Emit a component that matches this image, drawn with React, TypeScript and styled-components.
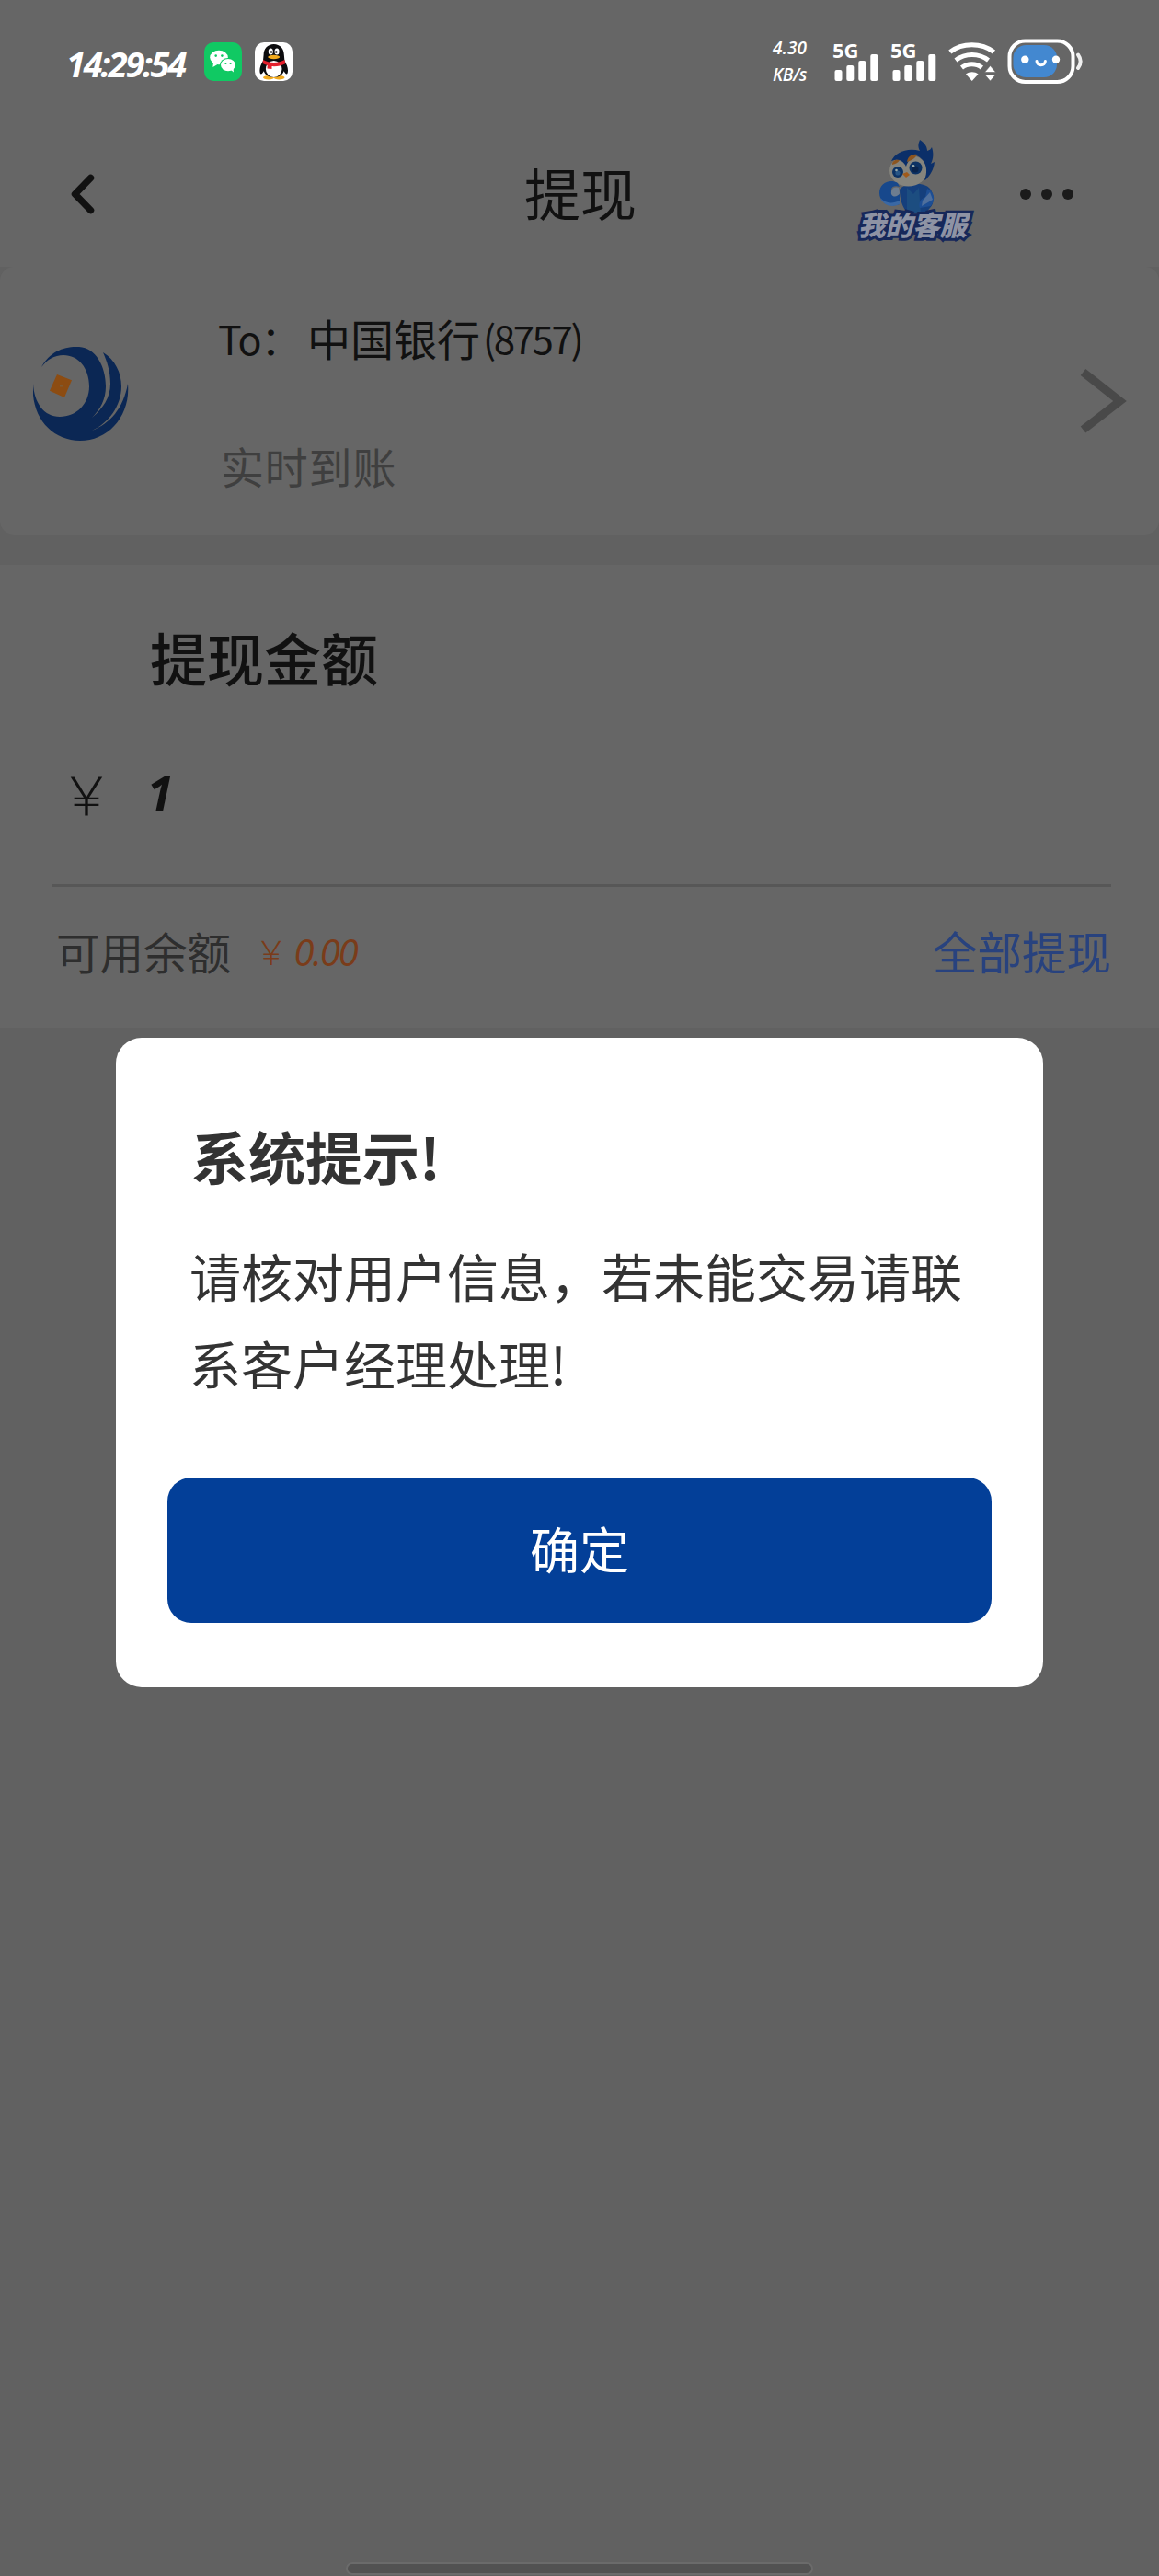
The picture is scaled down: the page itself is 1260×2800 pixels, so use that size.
import React, { FunctionComponent } from 'react'
import styled, { createGlobalStyle } from 'styled-components'

const Colors = {
    PAGE: '#616161',
    CARD: '#666666',
    INK: '#111111',
    INK_SOFT: '#2e2e2e',
    INK_MUTED: '#3f3f3f',
    LINE: '#575757',
    ARROW: '#494949',
    ORANGE: '#7a3c1a',
    LINK: '#28427e',
    NAVY: '#0b2754',
    DIALOG_TEXT: '#333333',
    PRIMARY: '#033f98',
    WHITE: '#ffffff'
}

const SIGNALS = ['sim-1', 'sim-2']

const GlobalStyle = createGlobalStyle`
    * {
        box-sizing: border-box;
    }

    body {
        margin: 0;
        background: ${Colors.PAGE};
        font-family: 'Noto Sans CJK SC', 'Noto Sans', sans-serif;
    }
`

const WechatIcon = () => (
    <svg width='41' height='42' viewBox='0 0 41 42'>
        <rect width='41' height='42' rx='10' fill='#10c963' />
        <ellipse cx='16' cy='16.5' rx='9.8' ry='7.8' fill='#fff' />
        <path d='M10 22l-.6 5 5-3z' fill='#fff' />
        <ellipse cx='26' cy='24.6' rx='9' ry='7.6' fill='#10c963' />
        <ellipse cx='26' cy='24.6' rx='8' ry='6.6' fill='#fff' />
        <path d='M29 30l3 2.4-.4-4z' fill='#fff' />
        <circle cx='12.7' cy='14.6' r='1.3' fill='#10c963' />
        <circle cx='19.4' cy='14.6' r='1.3' fill='#10c963' />
        <circle cx='23.4' cy='23' r='1.1' fill='#10c963' />
        <circle cx='28.6' cy='23' r='1.1' fill='#10c963' />
    </svg>
)

const QQIcon = () => (
    <svg width='41' height='42' viewBox='0 0 41 42'>
        <rect width='41' height='42' rx='10' fill='#fff' />
        <ellipse cx='15' cy='38.3' rx='6' ry='2.2' fill='#f0a91d' />
        <ellipse cx='26.5' cy='38.3' rx='6' ry='2.2' fill='#f0a91d' />
        <path
            d='M20.7 2C14 2 9.6 7 9.6 13.5l-.6 6.5c-2 3.5-3.6 7-3.6 10.5 0 2.5.6 4 1.4 4 .9 0 2-1.4 3-3.2C11 35.5 15 38 20.7 38s9.7-2.5 10.9-6.7c1 1.8 2.1 3.2 3 3.2.8 0 1.4-1.5 1.4-4 0-3.5-1.6-7-3.6-10.5l-.6-6.5C31.8 7 27.4 2 20.7 2z'
            fill='#0c0c0e'
        />
        <ellipse cx='20.7' cy='29' rx='8.8' ry='9' fill='#fff' />
        <path d='M9 19c7 4 16.5 4 23.5 0l.8 4.2c-4.5 2.4-9 3.2-14.8 2.9v3l-5-.6.2-3.6C11.5 24.4 10 23.9 8.6 23z' fill='#e5202d' />
        <ellipse cx='17.3' cy='10' rx='2.5' ry='3.5' fill='#fff' />
        <ellipse cx='24' cy='10' rx='2.5' ry='3.5' fill='#fff' />
        <circle cx='18' cy='10.5' r='1.2' fill='#111' />
        <circle cx='23.3' cy='10.5' r='1.2' fill='#111' />
        <ellipse cx='20.7' cy='16' rx='6.5' ry='2.2' fill='#f0a91d' />
    </svg>
)

const SignalIcon = () => (
    <svg width='50' height='42' viewBox='0 0 50 42'>
        <rect x='2.5' y='30' width='8' height='12' rx='2' fill='#fff' />
        <rect x='15.3' y='25' width='8' height='17' rx='2' fill='#fff' />
        <rect x='28.3' y='20' width='8' height='22' rx='2' fill='#fff' />
        <rect x='41.3' y='13' width='8' height='29' rx='2' fill='#fff' />
    </svg>
)

const WifiIcon = () => (
    <svg width='52' height='42' viewBox='0 0 52 42'>
        <g fill='none' stroke='#fff' strokeWidth='5'>
            <path d='M1.8 10.5C15 .2 36 .2 49.5 10.5' />
            <path d='M8 19.5c10.500-8 25-8 35.5 0' />
            <path d='M14.5 27.5c6.5-5 15.500-5 22 0' />
        </g>
        <path d='M19 34.500c4-3 9.500-3 13.500 0L25.700 42z' fill='#fff' />
        <path d='M45.500 25.500l6 7h-12zM45.500 42l6-7h-12z' fill='#fff' stroke={Colors.CARD} strokeWidth='.6' />
    </svg>
)

const BatteryIcon = () => (
    <svg width='83' height='50' viewBox='0 0 83 50'>
        <rect x='2.5' y='2.5' width='69' height='44.5' rx='17' fill='none' stroke='#fff' strokeWidth='4' />
        <rect x='6.5' y='7' width='47.5' height='35' rx='14' fill='#4388d0' />
        <circle cx='19.3' cy='22.8' r='4.2' fill='#fff' />
        <circle cx='53' cy='22.8' r='4.2' fill='#fff' />
        <path d='M32 24.5c.8 5.5 8.6 5.5 9.4 0' fill='none' stroke='#fff' strokeWidth='3' strokeLinecap='round' />
        <path d='M77 17.5c3.300 4.500 3.300 10 0 14.500' fill='none' stroke='#f0f0f0' strokeWidth='4' strokeLinecap='round' />
    </svg>
)

const MascotIcon = () => (
    <svg width='70' height='80' viewBox='24 0 70 80'>
        <path d='M48 54c5-7 26-9 33-1 5 7 5 16 0 21l-5 6H57c-6-6-9-16-9-26z' fill='#153f7c' />
        <path d='M56 52l7 7 6-7 2 28H56z' fill='#1c4d80' />
        <path d='M78 53c7 3 10 11 4 19l-12 2c-2-5 1-10 6-12z' fill='#1d4e94' />
        <path d='M73 66l8-9 3 8-12 7z' fill='#4f6f9c' />
        <ellipse cx='57.5' cy='33.5' rx='20.5' ry='17' fill='#85847d' />
        <path
            d='M39 23c4-9 17-15 31-11C67 6 69 3 70 0c6 4 8 8 8 12 3-1 4-2 5-4 2 6 2 12-1 18l4-2c-1 9-5 14-9 19l-2 1c5-12 1-23-9-27-6 2-9 6-11 12-3-6-8-9-16-6z'
            fill='#0b2f69'
        />
        <path d='M56 24c1-6 5-9 11-8-2 4-5 6-11 8zM40 27c0-4 3-6 8-5-2 3-4 4-8 5z' fill='#8c5520' />
        <circle cx='46' cy='35' r='6' fill='#0c3264' />
        <circle cx='65.5' cy='30.5' r='7' fill='#0c3264' />
        <circle cx='46' cy='36' r='2.6' fill='#275585' />
        <circle cx='65' cy='32' r='3.5' fill='#0a244b' />
        <circle cx='44.5' cy='33' r='1.3' fill='#9aa' />
        <circle cx='63' cy='28.5' r='1.4' fill='#9aa' />
        <path d='M51 37l5-2 3 3-4 3z' fill='#a05a1a' />
        <path d='M46 47c-9-5-20 0-20 11 0 10 12 16 22 12V59c-4 3-10 0-9-5 0-3 4-5 9-3z' fill='#17488c' />
        <path d='M48 58c-2 4-7 5-9 1-1-5 3-9 8-7z' fill='#6d7d90' />
        <path d='M27 63c5 6 13 7 21 3v4c-8 4-17 2-21-7z' fill='#3a68a4' />
    </svg>
)

const BankLogo = () => (
    <svg width='104' height='104' viewBox='0 0 104 104'>
        <path
            d='M9 23C18 6 34 0 50 1c18 1 29 21 29 43 0 14-6 25-15 34 12-10 20-22 20-37 0-14-4-25-8-34 13 8 20 22 20 37 0 21-14 40-32 48 20-8 34-24 39-51 3 35-21 62-52 62C20 103-3 77 0 41c1 21 12 36 29 36 18 0 32-14 32-33 0-20-12-34-28-34-10 0-18 5-24 13z'
            fill={Colors.NAVY}
        />
        <path d='M26 31l16 6.300L34 56l-16-7.300z' fill='#8c4c12' />
        <rect x='29' y='42' width='3' height='2.5' fill='#7f5a32' />
    </svg>
)

const App: FunctionComponent = () => {
    return (
        <Screen>
            <GlobalStyle />
            <StatusBar>
                <Clock>14:29:54</Clock>
                <AppIcons>
                    <WechatIcon />
                    <QQIcon />
                </AppIcons>
                <NetSpeed>
                    <SpeedLine spacing={0.2}>4.30</SpeedLine>
                    <SpeedLine spacing={-0.4}>KB/s</SpeedLine>
                </NetSpeed>
                <Signals>
                    {SIGNALS.map((id) => (
                        <Signal key={id}>
                            <SignalIcon />
                            <Network>5G</Network>
                        </Signal>
                    ))}
                </Signals>
                <WifiIcon />
                <BatteryIcon />
            </StatusBar>

            <Header>
                <Side>
                    <svg width='27' height='44' viewBox='0 0 27 44'>
                        <path d='M21.5 4.500L4.500 22l17 17.500' fill='none' stroke={Colors.INK} strokeWidth='7.5' strokeLinecap='round' strokeLinejoin='round' />
                    </svg>
                </Side>
                <PageTitle>提现</PageTitle>
                <Side alignEnd>
                    <Service>
                        <MascotIcon />
                        <ServiceLabel>我的客服</ServiceLabel>
                    </Service>
                    <Dots>
                        <Dot />
                        <Dot />
                        <Dot />
                    </Dots>
                </Side>
            </Header>

            <AccountCard>
                <LogoBox>
                    <BankLogo />
                </LogoBox>
                <AccountInfo>
                    <AccountRow>
                        <To>To：</To>
                        <span>中国银行</span>
                        <Tail>(8757)</Tail>
                    </AccountRow>
                    <Arrival>实时到账</Arrival>
                </AccountInfo>
                <svg width='52' height='72' viewBox='0 0 52 72'>
                    <path d='M3.500 4.500L43.500 36l-40 31' fill='none' stroke={Colors.ARROW} strokeWidth='9' />
                </svg>
            </AccountCard>

            <AmountCard>
                <AmountTitle>提现金额</AmountTitle>
                <AmountRow>
                    <Yen size={58}>￥</Yen>
                    <Amount>1</Amount>
                </AmountRow>
                <BalanceRow>
                    <span>可用余额</span>
                    <Balance>
                        <Yen size={36}>￥</Yen>
                        <BalanceValue>0.00</BalanceValue>
                    </Balance>
                    <WithdrawAll>全部提现</WithdrawAll>
                </BalanceRow>
            </AmountCard>

            <Overlay>
                <Dialog>
                    <DialogTitle>系统提示!</DialogTitle>
                    <DialogText>请核对用户信息，若未能交易请联系客户经理处理!</DialogText>
                    <ConfirmButton>确定</ConfirmButton>
                </Dialog>
            </Overlay>

            <HomeBar />
        </Screen>
    )
}

const Screen = styled.div`
    position: relative;
    display: flex;
    flex-direction: column;
    width: 1260px;
    height: 2800px;
    overflow: hidden;
    background: ${Colors.PAGE};
    color: ${Colors.INK};

    svg {
        display: block;
        flex: none;
    }
`

const StatusBar = styled.div`
    display: flex;
    align-items: center;
    height: 134px;
    padding: 0 82px 0 72px;
    background: ${Colors.CARD};
    color: ${Colors.WHITE};
`

const Clock = styled.div`
    width: 150px;
    padding-top: 4px;
    font: italic 700 38px/50px 'Open Sans', sans-serif;
    letter-spacing: -2.3px;
    white-space: nowrap;
`

const AppIcons = styled.div`
    display: flex;
    gap: 14px;
`

const NetSpeed = styled.div`
    display: flex;
    flex-direction: column;
    gap: 8px;
    width: 65px;
    margin-left: auto;
`

const SpeedLine = styled.span<{ spacing: number }>`
    font: italic 600 19px/21px 'Open Sans', sans-serif;
    letter-spacing: ${({ spacing }) => spacing}px;
`

const Signals = styled.div`
    display: flex;
    gap: 13px;
    margin-right: 13px;

    & + svg {
        margin-right: 12px;
    }
`

const Signal = styled.div`
    position: relative;
`

const Network = styled.span`
    position: absolute;
    top: -3px;
    left: 0;
    font: 700 22px/22px 'Open Sans', sans-serif;
`

const Header = styled.header`
    display: grid;
    grid-template-columns: 420px 1fr 420px;
    align-items: center;
    height: 156px;
    padding-bottom: 3px;
    background: ${Colors.CARD};
`

const Side = styled.div<{ alignEnd?: boolean }>`
    display: flex;
    align-items: center;
    justify-content: ${({ alignEnd }) => (alignEnd ? 'flex-end' : 'flex-start')};
    padding: ${({ alignEnd }) => (alignEnd ? '0 93px 0 0' : '0 0 0 77px')};
`

const PageTitle = styled.h1`
    margin: 0;
    padding: 0 0 3px 2px;
    text-align: center;
    font-size: 61px;
    font-weight: 400;
    line-height: 80px;
`

const Service = styled.div`
    display: flex;
    flex-direction: column;
    align-items: center;
    width: 124px;
    height: 118px;
    margin-right: 55px;

    svg {
        margin-right: 6px;
    }
`

const ServiceLabel = styled.span`
    margin-top: -7px;
    font-size: 29.5px;
    font-style: italic;
    font-weight: 900;
    line-height: 36px;
    white-space: nowrap;
    color: #8e93a4;
    paint-order: stroke fill;
    -webkit-text-stroke: 6px #16285a;
`

const Dots = styled.div`
    display: flex;
    gap: 11px;
`

const Dot = styled.i`
    width: 12px;
    height: 12px;
    border-radius: 50%;
    background: #1b1b1b;
`

const AccountCard = styled.section`
    display: flex;
    align-items: center;
    height: 291px;
    padding: 0 34px 0 36px;
    border-radius: 15px;
    background: ${Colors.CARD};
`

const LogoBox = styled.div`
    padding-bottom: 16px;
`

const AccountInfo = styled.div`
    display: flex;
    flex: 1;
    flex-direction: column;
    gap: 79px;
    margin-left: 97px;
    padding-top: 2px;
    font-size: 47px;
    line-height: 60px;
`

const AccountRow = styled.div`
    display: flex;
`

const To = styled.span`
    width: 97px;
    font-size: 43px;
    letter-spacing: -1px;
    white-space: nowrap;
`

const Tail = styled.span`
    margin-left: 3px;
    font-size: 42px;
    letter-spacing: -2.4px;
`

const Arrival = styled.div`
    margin-left: 3px;
    letter-spacing: 0.8px;
    color: ${Colors.INK_MUTED};
`

const AmountCard = styled.section`
    height: 503px;
    margin-top: 33px;
    padding: 60px 52px 0 56px;
    background: ${Colors.CARD};
`

const AmountTitle = styled.h2`
    margin: 0 0 0 107px;
    font-size: 62px;
    font-weight: 500;
    line-height: 80px;
`

const AmountRow = styled.div`
    display: flex;
    align-items: center;
    height: 210px;
    padding: 6px 0 0 6px;
    border-bottom: 3px solid ${Colors.LINE};
`

const Yen = styled.span<{ size: number }>`
    width: ${({ size }) => size * 1.1}px;
    text-align: center;
    font-size: ${({ size }) => size}px;
    font-weight: 300;
`

const Amount = styled.span`
    margin-left: 34px;
    font: italic 700 52px/60px 'Open Sans', sans-serif;
`

const BalanceRow = styled.div`
    display: flex;
    align-items: center;
    height: 140px;
    padding: 0 0 2px 5px;
    font-size: 47.5px;
    color: ${Colors.INK_SOFT};
`

const Balance = styled.div`
    display: flex;
    align-items: center;
    margin-left: 24px;
    color: ${Colors.ORANGE};
`

const BalanceValue = styled.span`
    margin-left: 5px;
    padding-top: 3px;
    font: italic 400 40px/50px 'Open Sans', sans-serif;
    letter-spacing: -2px;
`

const WithdrawAll = styled.a`
    margin-left: auto;
    font-size: 48.5px;
    color: ${Colors.LINK};
`

const Overlay = styled.div`
    position: absolute;
    inset: 0;
    display: flex;
    justify-content: center;
    align-items: flex-start;
    padding-top: 1128px;
`

const Dialog = styled.div`
    width: 1008px;
    height: 706px;
    padding: 88px 56px 0;
    border-radius: 28px;
    background: ${Colors.WHITE};
    color: ${Colors.DIALOG_TEXT};
`

const DialogTitle = styled.h3`
    margin: 0 0 0 26px;
    font-size: 62px;
    font-weight: 700;
    line-height: 80px;
`

const DialogText = styled.p`
    width: 850px;
    margin: 42px 0 0 24px;
    font-size: 56px;
    line-height: 95px;
    word-break: break-all;
`

const ConfirmButton = styled.button`
    display: block;
    width: 896px;
    height: 158px;
    margin-top: 78px;
    padding: 0 0 6px;
    border: 0;
    border-radius: 26px;
    background: ${Colors.PRIMARY};
    color: ${Colors.WHITE};
    font-family: inherit;
    font-size: 54px;
`

const HomeBar = styled.div`
    width: 508px;
    height: 14px;
    margin: auto 0 1px 376px;
    border: 2px solid #6b6b6b;
    border-radius: 7px;
    background: #525252;
`

export default App
